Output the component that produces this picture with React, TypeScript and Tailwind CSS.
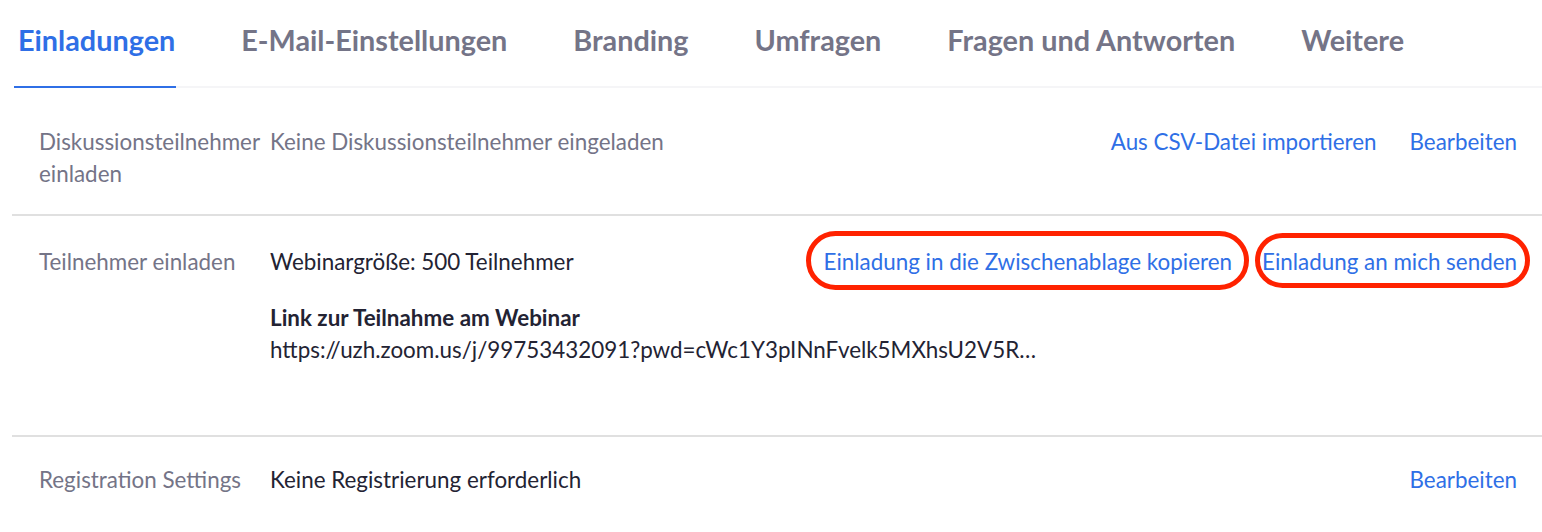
import type { ReactNode } from "react";

const tabs = [
  "Einladungen",
  "E-Mail-Einstellungen",
  "Branding",
  "Umfragen",
  "Fragen und Antworten",
  "Weitere",
];

// rote Markierung aus dem Screenshot, liegt über dem Link
function Marked({
  children,
  className,
}: {
  children: ReactNode;
  className: string;
}) {
  return (
    <span className="relative inline-block">
      {children}
      <span
        aria-hidden
        className={`pointer-events-none absolute rounded-[30px] border-[5px] border-[#ff2200] ${className}`}
      />
    </span>
  );
}

function Row({
  label,
  children,
  actions,
  className,
}: {
  label: ReactNode;
  children: ReactNode;
  actions?: ReactNode;
  className?: string;
}) {
  return (
    <div className={`flex items-start pl-[27px] pr-[25px] ${className ?? ""}`}>
      <div className="w-[231px] shrink-0 pr-[8px] text-[#747487]">{label}</div>
      <div className="min-w-0 flex-1 text-[#232333]">{children}</div>
      {actions}
    </div>
  );
}

export default function App() {
  return (
    <div
      className="min-h-[532px] bg-white text-[22.4px] leading-[32px]"
      style={{ fontFamily: "Lato, 'Open Sans', sans-serif" }}
    >
      <nav className="ml-[14px] flex gap-[61px] border-b-2 border-[#f5f5f7]">
        {tabs.map((t, i) => (
          <span
            key={t}
            className={
              i === 0
                ? "-mb-[2px] border-b-2 border-[#2f6fe6] pl-[4px] pr-[1px] pt-[23px] pb-[27px] text-[28.8px] leading-[34px] font-bold text-[#2f6fe6]"
                : "pl-[4px] pr-[1px] pt-[23px] pb-[29px] text-[28.8px] leading-[34px] font-bold text-[#747487]"
            }
          >
            {t}
          </span>
        ))}
      </nav>

      <div className="ml-[12px] border-b-2 border-[#e0e0e0]">
        <Row
          className="pt-[38px] pb-[24px]"
          label="Diskussionsteilnehmer einladen"
          actions={
            <div className="flex gap-[33px] text-[#2f6fe6]">
              <a>Aus CSV-Datei importieren</a>
              <a>Bearbeiten</a>
            </div>
          }
        >
          <span className="text-[#747487]">
            Keine Diskussionsteilnehmer eingeladen
          </span>
        </Row>
      </div>

      <div className="ml-[12px] border-b-2 border-[#e0e0e0]">
        <Row
          className="pt-[30px] pb-[69px]"
          label="Teilnehmer einladen"
          actions={
            <div className="flex gap-[30px] text-[#2f6fe6]">
              <Marked className="-top-[15px] -bottom-[12px] -left-[18px] -right-[17px]">
                <a>Einladung in die Zwischenablage kopieren</a>
              </Marked>
              <Marked className="-top-[13px] -bottom-[10px] -left-[7px] -right-[13px]">
                <a>Einladung an mich senden</a>
              </Marked>
            </div>
          }
        >
          <p>Webinargröße: 500 Teilnehmer</p>
          <p className="mt-[24px] font-bold">Link zur Teilnahme am Webinar</p>
          <p className="whitespace-nowrap">
            https://uzh.zoom.us/j/99753432091?pwd=cWc1Y3pINnFvelk5MXhsU2V5R…
          </p>
        </Row>
      </div>

      <div className="ml-[12px]">
        <Row
          className="pt-[27px] pb-[35px]"
          label="Registration Settings"
          actions={<a className="text-[#2f6fe6]">Bearbeiten</a>}
        >
          Keine Registrierung erforderlich
        </Row>
      </div>
    </div>
  );
}
